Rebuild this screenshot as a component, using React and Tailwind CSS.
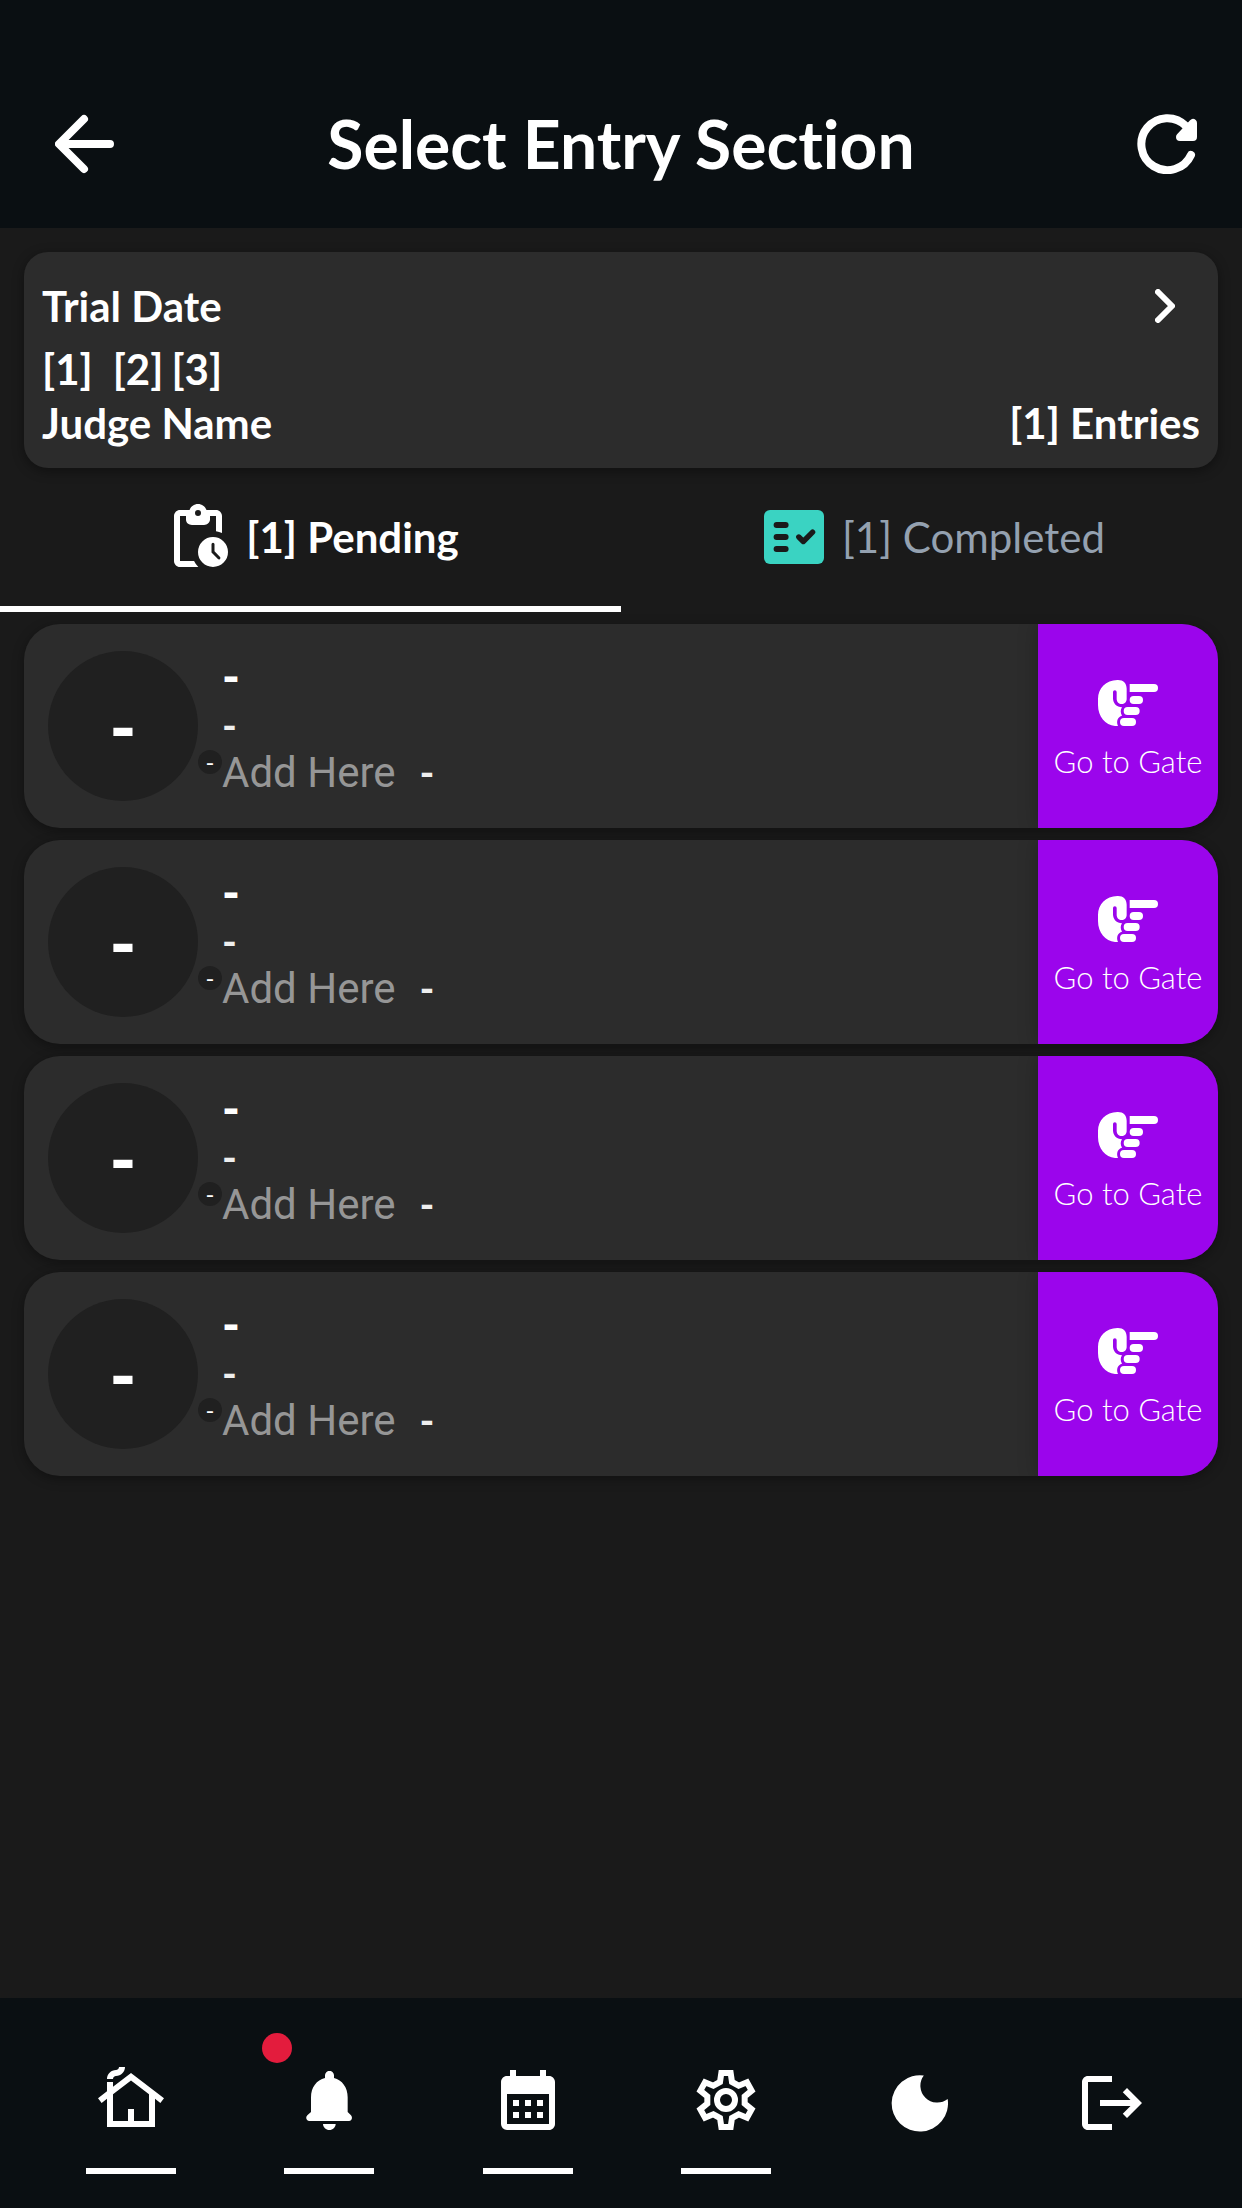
import React from "react";
import { MdCalendarMonth, MdLogout, MdOutlineCottage } from "react-icons/md";

const FONT = "font-['Lato',sans-serif] [font-variant-ligatures:none]";

function BackIcon() {
  return (
    <svg viewBox="0 0 60 60" className="size-[60px]" fill="none" stroke="currentColor" strokeWidth="8" strokeLinecap="round" strokeLinejoin="round" aria-hidden="true">
      <path d="M55 30H5M29 5L4 30l25 25" />
    </svg>
  );
}

function ReloadIcon() {
  return (
    <svg viewBox="0 0 60 60" className="size-[60px]" fill="none" stroke="currentColor" strokeLinecap="round" strokeLinejoin="round" aria-hidden="true">
      <path d="M54 41A26 26 0 1 1 49 12" strokeWidth="8" />
      <path d="M56 9V23H43Z" fill="currentColor" strokeWidth="8" />
    </svg>
  );
}

function PendingIcon() {
  return (
    <svg viewBox="0 0 24 24" className="size-[72px]" fill="currentColor" aria-hidden="true">
      <path d="M17 12a5 5 0 1 0 0 10 5 5 0 0 0 0-10zm1.65 7.35L16.5 17.2V14.4a.5.5 0 0 1 1 0v2.39l1.85 1.85a.5.5 0 0 1-.7.71z" />
      <path d="M18 3h-3.18C14.4 1.84 13.3 1 12 1s-2.4.84-2.82 2H6c-1.100 0-2 .9-2 2v15c0 1.100.9 2 2 2h6.110a6.740 6.740 0 0 1-1.420-2H6V5h2v1.200C8 7.300 8.900 8 10 8h4c1.100 0 2-.8 2-1.800V5h2v5.080c.71.1 1.380.31 2 .6V5c0-1.100-.9-2-2-2zm-6 2a1 1 0 1 1 0-2 1 1 0 0 1 0 2z" />
    </svg>
  );
}

function CompletedIcon() {
  return (
    <svg viewBox="0 0 24 24" className="size-[72px]" fill="none" stroke="#1a1a1a" strokeLinecap="round" strokeLinejoin="round" aria-hidden="true">
      <rect x="2" y="3" width="20" height="18" rx="2" fill="#3ad3c2" stroke="none" />
      <path d="M6.2 8h3M6.2 12h3M6.2 16h3" strokeWidth="2" />
      <path d="M13.6 12l1.5 1.5 3.1-3.1" strokeWidth="1.8" />
    </svg>
  );
}

function HandIcon() {
  return (
    <svg viewBox="294 210 180 138" className="h-[46px] w-[60px]" fill="currentColor" aria-hidden="true">
      <path d="M352 210h2c16 0 26 10 26 26v31c0 9-7 15-15 15s-15-6-15-15v-21a5.500 5.500 0 0 0-11 0v19c0 15 11 27 27 27-5 7-5 17 0 25-13 3-18 17-12 31h-9c-29-3-51-28-51-63v-19c0-30 24-56 58-56z" />
      <path d="M389 222h73a12 12 0 0 1 0 24h-73z" />
      <rect x="389" y="258" width="40" height="24" rx="12" />
      <rect x="371" y="291" width="48" height="24" rx="12" />
      <rect x="360" y="324" width="48" height="24" rx="12" />
    </svg>
  );
}

function BellIcon() {
  return (
    <svg viewBox="738 243 138 177" className="h-[59px] w-[46px]" fill="currentColor" aria-hidden="true">
      <path d="M795 264v-8a13 13 0 0 1 27 0v8c24 6 41 28 41 58v44l10 10c6 7 2 17-6 17H748c-8 0-13-10-6-17l11-10v-44c0-30 17-52 42-58z" />
      <path d="M789 402h38c0 10-9 18-19 18s-19-8-19-18z" />
    </svg>
  );
}

const gearPoints = [0, 60, 120, 180, 240, 300]
  .flatMap((deg) => {
    const a = (deg * Math.PI) / 180;
    return [[-18, -54], [-14, -81], [14, -81], [18, -54]].map(([x, y]) =>
      [x * Math.cos(a) - y * Math.sin(a), x * Math.sin(a) + y * Math.cos(a)].map(Math.round).join(",")
    );
  })
  .join(" ");

function GearIcon() {
  return (
    <svg viewBox="-90 -90 180 180" className="size-[60px]" fill="none" stroke="currentColor" strokeWidth="18" aria-hidden="true">
      <polygon points={gearPoints} />
      <circle r="27" />
    </svg>
  );
}

function MoonIcon() {
  return (
    <svg viewBox="150 255 172 171" className="size-[57px]" fill="currentColor" aria-hidden="true">
      <path d="M249 256A85 85 0 1 0 321 327A51 51 0 0 1 249 256z" />
    </svg>
  );
}

function EntryRow() {
  return (
    <li className="flex h-[204px] overflow-hidden rounded-[36px] bg-[#2c2c2c] shadow-[0_3px_12px_rgba(0,0,0,0.35)]">
      <div className="flex flex-1 pl-6">
        <div className="flex size-[150px] shrink-0 items-center justify-center self-center rounded-full bg-[#202020] text-[72px] font-black leading-none">-</div>
        <div className="mt-[126px] flex size-6 shrink-0 items-center justify-center rounded-full bg-[#202020] text-[24px] leading-none">-</div>
        <div className="flex flex-col pt-[26px]">
          <span className="text-[48px] font-black leading-[52px]">-</span>
          <span className="text-[40px] font-bold leading-[46px] text-[#eeeeee]">-</span>
          <div className="flex items-baseline gap-6 leading-[48px]">
            <button type="button" className="font-['Roboto',sans-serif] text-[42px] text-[#969696]">Add Here</button>
            <span className="text-[40px] font-bold text-[#eeeeee]">-</span>
          </div>
        </div>
      </div>
      <button type="button" className="flex w-[180px] flex-col items-center justify-center gap-[10px] bg-[#9b05ec] shadow-[0_0_18px_rgba(0,0,0,0.25)]">
        <span className="flex h-[60px] items-center"><HandIcon /></span>
        <span className="text-[31px] font-light leading-[36px]">Go to Gate</span>
      </button>
    </li>
  );
}

function NavItem({ label, line = true, width = "w-[90px]", children, badge }) {
  return (
    <a href="#" aria-label={label} className={`relative flex flex-col items-center ${width}`}>
      {badge && <span className="absolute -left-[22px] -top-[31px] size-[30px] rounded-full bg-[#e31c3d]" />}
      <span className="flex h-[72px] items-center">{children}</span>
      {line && <span className="mt-8 h-[6px] w-[90px] bg-white" />}
    </a>
  );
}

export default function App() {
  return (
    <div className={`flex min-h-screen flex-col bg-[#1a1a1a] text-white ${FONT}`}>
      <header className="flex h-[228px] items-center justify-between bg-[#0a0f12] px-[45px] pt-[60px]">
        <button type="button" aria-label="Back" className="flex w-20 justify-center"><BackIcon /></button>
        <h1 className="text-[66px] font-bold leading-[80px]">Select Entry Section</h1>
        <button type="button" aria-label="Reload" className="flex w-20 justify-end"><ReloadIcon /></button>
      </header>

      <main className="flex flex-1 flex-col">
        <section className="mx-6 mt-6 rounded-3xl bg-[#2c2c2c] p-[18px] text-[42px] font-bold leading-[54px] shadow-[0_3px_12px_rgba(0,0,0,0.4)]">
          <div className="flex h-[72px] items-center justify-between">
            <h2>Trial Date</h2>
            <button type="button" aria-label="Open trial" className="pr-[25px]">
              <svg viewBox="0 0 20 34" className="h-[34px] w-[20px]" fill="none" stroke="currentColor" strokeWidth="6" strokeLinecap="round" strokeLinejoin="round" aria-hidden="true">
                <path d="M3 3l14 14L3 31" />
              </svg>
            </button>
          </div>
          <div className="flex">
            <span className="mr-5">[1]</span>
            <span className="mr-2">[2]</span>
            <span>[3]</span>
          </div>
          <div className="flex justify-between">
            <span>Judge Name</span>
            <span>[1] Entries</span>
          </div>
        </section>

        <div role="tablist" className="grid grid-cols-2 text-[42px]">
          <button type="button" role="tab" aria-selected="true" className="flex h-[144px] items-center justify-center gap-3 border-b-[6px] border-white font-bold">
            <PendingIcon />
            [1] Pending
          </button>
          <button type="button" role="tab" aria-selected="false" className="flex h-[144px] items-center justify-center gap-3 border-b-[6px] border-transparent text-[#94a1b0]">
            <CompletedIcon />
            [1] Completed
          </button>
        </div>

        <ul className="mx-6 mt-3 flex flex-col gap-3">
          <EntryRow />
          <EntryRow />
          <EntryRow />
          <EntryRow />
        </ul>
      </main>

      <nav className="flex h-[210px] justify-around bg-[#0a0f12] px-8 pt-[66px]">
        <NavItem label="Home"><MdOutlineCottage size={72} /></NavItem>
        <NavItem label="Notifications" badge><BellIcon /></NavItem>
        <NavItem label="Calendar"><MdCalendarMonth size={72} /></NavItem>
        <NavItem label="Settings"><GearIcon /></NavItem>
        <NavItem label="Dark mode" line={false} width="w-[80px] pt-[3px]"><MoonIcon /></NavItem>
        <NavItem label="Log out" line={false} width="w-[88px] pt-[3px]"><MdLogout size={72} /></NavItem>
      </nav>
    </div>
  );
}
